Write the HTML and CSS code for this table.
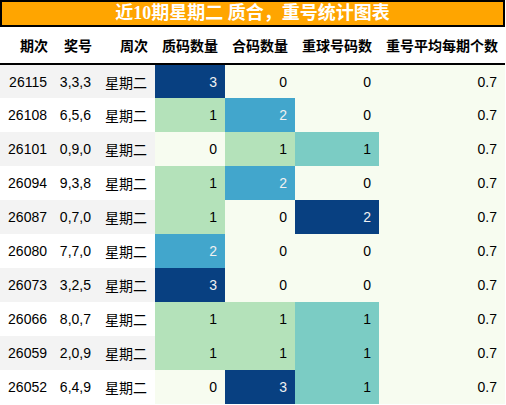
FILE: index.html
```html
<!DOCTYPE html>
<html lang="zh">
<head>
  <meta charset="UTF-8" />
  <title>近10期星期二 质合，重号统计图表</title>
  <link rel="stylesheet" href="styles.css">
</head>
<body>
  <div class="wrap">
    <div class="title">近10期星期二 质合，重号统计图表</div>
    <table class="stats">
      <colgroup>
        <col class="c-issue"><col class="c-num"><col class="c-day">
        <col class="c-prime"><col class="c-comp"><col class="c-rep"><col class="c-avg">
      </colgroup>
      <thead>
        <tr>
          <th>期次</th><th>奖号</th><th>周次</th><th>质码数量</th><th>合码数量</th><th>重球号码数</th><th>重号平均每期个数</th>
        </tr>
      </thead>
      <tbody>
        <tr><td>26115</td><td>3,3,3</td><td>星期二</td><td class="g100">3</td><td class="g0">0</td><td class="g0">0</td><td class="g0">0.7</td></tr>
        <tr><td>26108</td><td>6,5,6</td><td>星期二</td><td class="g33">1</td><td class="g67">2</td><td class="g0">0</td><td class="g0">0.7</td></tr>
        <tr><td>26101</td><td>0,9,0</td><td>星期二</td><td class="g0">0</td><td class="g33">1</td><td class="g50">1</td><td class="g0">0.7</td></tr>
        <tr><td>26094</td><td>9,3,8</td><td>星期二</td><td class="g33">1</td><td class="g67">2</td><td class="g0">0</td><td class="g0">0.7</td></tr>
        <tr><td>26087</td><td>0,7,0</td><td>星期二</td><td class="g33">1</td><td class="g0">0</td><td class="g100">2</td><td class="g0">0.7</td></tr>
        <tr><td>26080</td><td>7,7,0</td><td>星期二</td><td class="g67">2</td><td class="g0">0</td><td class="g0">0</td><td class="g0">0.7</td></tr>
        <tr><td>26073</td><td>3,2,5</td><td>星期二</td><td class="g100">3</td><td class="g0">0</td><td class="g0">0</td><td class="g0">0.7</td></tr>
        <tr><td>26066</td><td>8,0,7</td><td>星期二</td><td class="g33">1</td><td class="g33">1</td><td class="g50">1</td><td class="g0">0.7</td></tr>
        <tr><td>26059</td><td>2,0,9</td><td>星期二</td><td class="g33">1</td><td class="g33">1</td><td class="g50">1</td><td class="g0">0.7</td></tr>
        <tr><td>26052</td><td>6,4,9</td><td>星期二</td><td class="g0">0</td><td class="g100">3</td><td class="g50">1</td><td class="g0">0.7</td></tr>
      </tbody>
    </table>
  </div>
</body>
</html>
```

FILE: styles.css
```css
/* Base */
* {
  box-sizing: border-box;
  margin: 0;
  padding: 0;
}
body {
  background: #fff;
  color: #000;
  font-family: 'Liberation Sans', 'Noto Sans CJK SC', sans-serif;
  font-size: 14px;
}
.wrap {
  width: 505px;
}

/* Title bar */
.title {
  height: 27px;
  background: #ffa500;
  border: 2px solid #000;
  color: #fff;
  font-family: 'Liberation Serif', 'Noto Sans CJK SC', serif;
  font-weight: 700;
  font-size: 18px;
  line-height: 22px;
  text-align: center;
  margin-bottom: 1px;
}

/* Table */
.stats {
  width: 505px;
  table-layout: fixed;
  border-collapse: collapse;
}
.c-issue { width: 55px; }
.c-num { width: 44px; }
.c-day { width: 56px; }
.c-prime { width: 70px; }
.c-comp { width: 70px; }
.c-rep { width: 84px; }
.c-avg { width: 126px; }

.stats th {
  height: 36px;
  font-weight: 700;
  text-align: right;
  padding: 0 7px 2px 0;
  border-bottom: 2px solid #000;
  white-space: nowrap;
}
.stats td {
  height: 34px;
  text-align: right;
  padding: 0 8px 0 0;
  white-space: nowrap;
}
.stats tbody tr:nth-child(odd) td {
  background: #f3f3f3;
}

/* GnBu gradient levels */
.stats tbody tr td.g0 { background: #f7fcf0; color: #000; }
.stats tbody tr td.g33 { background: #b4e2ba; color: #000; }
.stats tbody tr td.g50 { background: #7bccc4; color: #000; }
.stats tbody tr td.g67 { background: #42a6cc; color: #f1f1f1; }
.stats tbody tr td.g100 { background: #084081; color: #f1f1f1; }
```
